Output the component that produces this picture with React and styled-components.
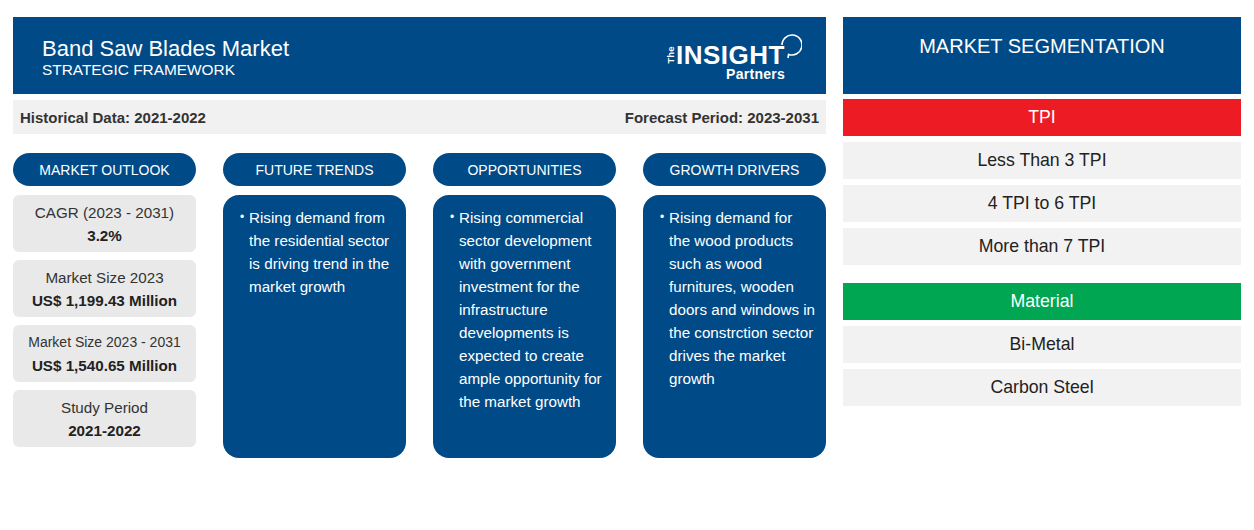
import React from 'react';
import styled, { createGlobalStyle } from 'styled-components';

const BLUE = '#004a87';

const GlobalStyle = createGlobalStyle`
  html, body {
    margin: 0;
    padding: 0;
    background: #ffffff;
    font-family: "Liberation Sans", Arial, sans-serif;
  }
`;

const Page = styled.div`
  display: flex;
  align-items: flex-start;
  gap: 17px;
  padding: 17px 0 0 13px;
  width: 1254px;
  height: 530px;
  box-sizing: border-box;
`;

const Framework = styled.div`
  width: 813px;
  display: flex;
  flex-direction: column;
`;

const Banner = styled.div`
  height: 77px;
  background: ${BLUE};
  display: flex;
  align-items: flex-start;
  justify-content: space-between;
  padding: 0 22px 0 29px;
  box-sizing: border-box;
`;

const TitleBlock = styled.div`
  color: #fff;
  display: flex;
  flex-direction: column;
  padding-top: 19px;
`;

const Title = styled.div`
  font-size: 22px;
  line-height: 25px;
`;

const Subtitle = styled.div`
  font-size: 15.4px;
  line-height: 18px;
`;

const Logo = styled.div`
  position: relative;
  width: 140px;
  height: 50px;
  margin-top: 14px;
  color: #fff;
  font-weight: 700;
`;

const LogoThe = styled.span`
  position: absolute;
  left: -2.5px;
  top: 18.5px;
  width: 17px;
  height: 10px;
  font-size: 9.5px;
  line-height: 10px;
  text-align: center;
  transform: rotate(-90deg);
`;

const LogoInsight = styled.span`
  position: absolute;
  left: 12px;
  top: 13.5px;
  font-size: 26px;
  line-height: 20px;
  letter-spacing: 0.5px;
`;

const LogoPartners = styled.span`
  position: absolute;
  left: 62px;
  top: 35.5px;
  font-size: 14px;
  line-height: 14px;
  letter-spacing: 0.3px;
`;

const LogoBulb = styled.svg`
  position: absolute;
  left: 110px;
  top: 1px;
`;

const PeriodBar = styled.div`
  margin-top: 6px;
  height: 34px;
  background: #f1f1f1;
  display: flex;
  align-items: center;
  justify-content: space-between;
  padding: 0 7px;
  font-size: 15px;
  font-weight: 700;
  color: #333;
`;

const Columns = styled.div`
  margin-top: 19px;
  display: grid;
  grid-template-columns: repeat(4, 183px);
  column-gap: 27px;
`;

const Column = styled.div`
  display: flex;
  flex-direction: column;
  gap: 9px;
`;

const Pill = styled.div`
  height: 33px;
  border-radius: 17px;
  background: ${BLUE};
  color: #fff;
  font-size: 14px;
  display: flex;
  align-items: center;
  justify-content: center;
`;

const StatList = styled.div`
  display: flex;
  flex-direction: column;
  gap: 8px;
`;

const StatBox = styled.div`
  height: 57px;
  border-radius: 6px;
  background: #e9e9e9;
  display: flex;
  flex-direction: column;
  align-items: center;
  justify-content: center;
  color: #333;
  font-size: ${(p) => (p.$small ? '14px' : '15.2px')};
  line-height: 23px;
  padding-top: 1px;
  box-sizing: border-box;
`;

const StatValue = styled.div`
  font-size: 15.2px;
  font-weight: 700;
  color: #222;
`;

const TextCard = styled.div`
  height: 263px;
  border-radius: 16px;
  background: ${BLUE};
  color: #fff;
  box-sizing: border-box;
  padding: 11px 6px 0 17px;
`;

const Bullet = styled.div`
  display: flex;
  font-size: 15.2px;
  line-height: 23px;

  &::before {
    content: '•';
    width: 9px;
    flex: none;
    font-size: 12px;
  }
`;

const Segmentation = styled.div`
  width: 398px;
  display: flex;
  flex-direction: column;
`;

const SegHeader = styled.div`
  height: 77px;
  background: ${BLUE};
  color: #fff;
  font-size: 20px;
  text-align: center;
  padding-top: 18px;
  box-sizing: border-box;
`;

const SegGroup = styled.div`
  display: flex;
  flex-direction: column;
  gap: 6px;
  margin-top: ${(p) => p.$gap}px;
`;

const SegTitle = styled.div`
  height: 37px;
  background: ${(p) => p.$color};
  color: #fff;
  font-size: 17.7px;
  display: flex;
  align-items: center;
  justify-content: center;
`;

const SegItem = styled.div`
  height: 37px;
  background: #f2f2f2;
  color: #222;
  font-size: 17.7px;
  display: flex;
  align-items: center;
  justify-content: center;
`;

const columns = [
  {
    title: 'FUTURE TRENDS',
    text: ['Rising demand from', 'the residential sector', 'is driving trend in the', 'market growth'],
  },
  {
    title: 'OPPORTUNITIES',
    text: [
      'Rising commercial',
      'sector development',
      'with government',
      'investment for the',
      'infrastructure',
      'developments is',
      'expected to create',
      'ample opportunity for',
      'the market growth',
    ],
  },
  {
    title: 'GROWTH DRIVERS',
    text: [
      'Rising demand for',
      'the wood products',
      'such as wood',
      'furnitures, wooden',
      'doors and windows in',
      'the constrction sector',
      'drives the market',
      'growth',
    ],
  },
];

const stats = [
  { label: 'CAGR (2023 - 2031)', value: '3.2%' },
  { label: 'Market Size 2023', value: 'US$ 1,199.43 Million' },
  { label: 'Market Size 2023 - 2031', value: 'US$ 1,540.65 Million', small: true },
  { label: 'Study Period', value: '2021-2022' },
];

const segments = [
  { title: 'TPI', color: '#ed1c24', gap: 5, items: ['Less Than 3 TPI', '4 TPI to 6 TPI', 'More than 7 TPI'] },
  { title: 'Material', color: '#00a651', gap: 18, items: ['Bi-Metal', 'Carbon Steel'] },
];

const App = () => (
  <>
    <GlobalStyle />
    <Page>
      <Framework>
        <Banner>
          <TitleBlock>
            <Title>Band Saw Blades Market</Title>
            <Subtitle>STRATEGIC FRAMEWORK</Subtitle>
          </TitleBlock>
          <Logo>
            <LogoThe>The</LogoThe>
            <LogoInsight>INSIGHT</LogoInsight>
            <LogoBulb width="28" height="28" viewBox="0 0 28 28">
              <path
                d="M8 13 A10 10 0 1 1 14.6 22.4 L14 26"
                fill="none"
                stroke="#fff"
                strokeWidth="1.6"
              />
            </LogoBulb>
            <LogoPartners>Partners</LogoPartners>
          </Logo>
        </Banner>
        <PeriodBar>
          <span>Historical Data: 2021-2022</span>
          <span>Forecast Period: 2023-2031</span>
        </PeriodBar>
        <Columns>
          <Column>
            <Pill>MARKET OUTLOOK</Pill>
            <StatList>
              {stats.map((s) => (
                <StatBox key={s.label} $small={s.small}>
                  <div>{s.label}</div>
                  <StatValue>{s.value}</StatValue>
                </StatBox>
              ))}
            </StatList>
          </Column>
          {columns.map((c) => (
            <Column key={c.title}>
              <Pill>{c.title}</Pill>
              <TextCard>
                <Bullet>
                  <div>
                    {c.text.map((line) => (
                      <div key={line}>{line}</div>
                    ))}
                  </div>
                </Bullet>
              </TextCard>
            </Column>
          ))}
        </Columns>
      </Framework>
      <Segmentation>
        <SegHeader>MARKET SEGMENTATION</SegHeader>
        {segments.map((g) => (
          <SegGroup key={g.title} $gap={g.gap}>
            <SegTitle $color={g.color}>{g.title}</SegTitle>
            {g.items.map((item) => (
              <SegItem key={item}>{item}</SegItem>
            ))}
          </SegGroup>
        ))}
      </Segmentation>
    </Page>
  </>
);

export default App;
